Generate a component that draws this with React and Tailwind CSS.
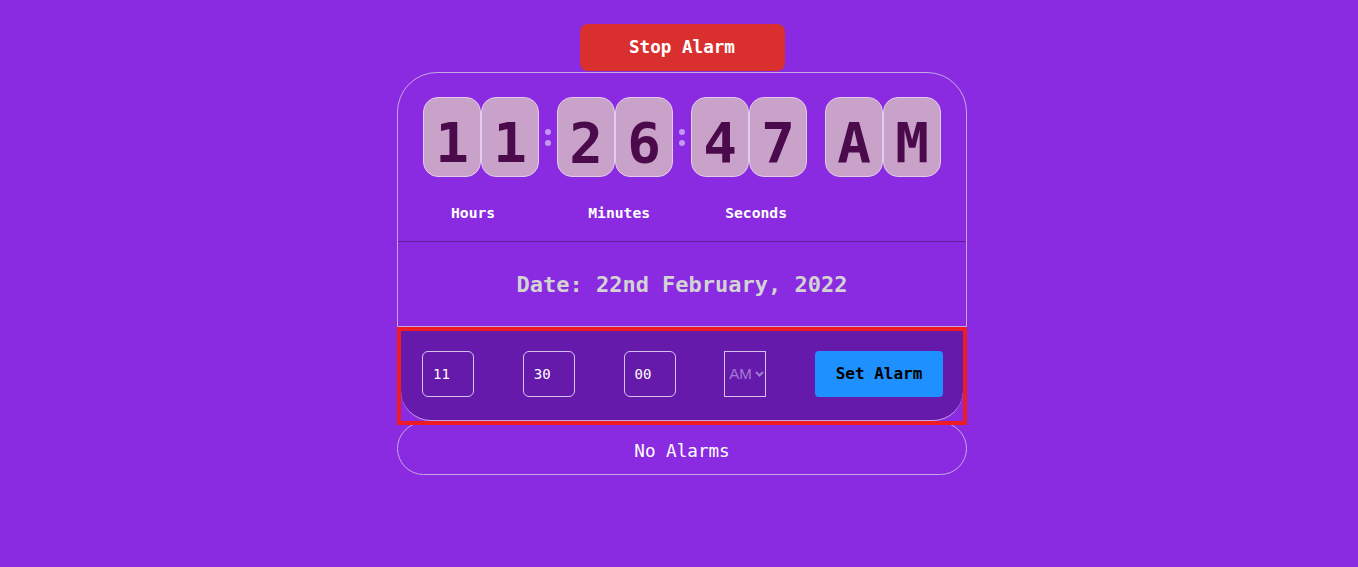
import React from "react";

const mono = { fontFamily: '"DejaVu Sans Mono", "Liberation Mono", monospace' };

function Box({ ch }) {
  return (
    <div className="w-[58px] h-[80px] rounded-[15px] bg-[#c8a2c8] border border-[#e4cbec] flex items-center justify-center">
      <span className="text-[56px] font-bold text-[#4b0a4b] leading-none translate-y-[6px]">{ch}</span>
    </div>
  );
}

function Colon({ show = true }) {
  return (
    <div className="w-[18px] h-[80px] flex flex-col items-center justify-center gap-[5px]">
      {show && <div className="w-[6px] h-[6px] rounded-full bg-[#c498f2]" />}
      {show && <div className="w-[6px] h-[6px] rounded-full bg-[#c498f2]" />}
    </div>
  );
}

function Field({ v }) {
  return (
    <div className="w-[52px] h-[46px] rounded-[6px] border border-[#d6c2ea] flex items-center pl-[10px] text-white text-[14px]">
      {v}
    </div>
  );
}

export default function App() {
  return (
    <div className="min-h-screen bg-[#8a2be2] flex flex-col items-center pt-[24px] pl-[6px]" style={mono}>
      <button className="w-[205px] h-[47px] rounded-[8px] bg-[#d9302f] text-white font-bold text-[17.6px]">
        Stop Alarm
      </button>
      <div className="mt-px w-[570px] border border-[#c8a6e6] rounded-t-[40px]">
        <div className="pt-[24px] pb-[18px] border-b border-[#5b1f96]">
          <div className="flex justify-center">
            <Box ch="1" />
            <Box ch="1" />
            <Colon />
            <Box ch="2" />
            <Box ch="6" />
            <Colon />
            <Box ch="4" />
            <Box ch="7" />
            <Colon show={false} />
            <Box ch="A" />
            <Box ch="M" />
          </div>
          <div className="mt-[26px] h-[20px] leading-[20px] flex text-white font-bold text-[14.7px] pl-[53px]">
            <span>Hours</span>
            <span className="ml-[93px]">Minutes</span>
            <span className="ml-[75px]">Seconds</span>
          </div>
        </div>
        <div className="h-[84px] flex items-center justify-center text-[#d3d3d3] font-bold text-[22px]">
          Date: 22nd February, 2022
        </div>
      </div>
      <div className="relative z-10 w-[570px] border-4 border-[#ed1c24]">
        <div className="w-[562px] h-[90px] bg-[#661aab] border-b border-[#c8a6e6] rounded-b-[30px] flex items-start justify-between pt-[20px] pl-[21px] pr-[20px]">
          <Field v="11" />
          <Field v="30" />
          <Field v="00" />
          <div
            className="w-[42px] h-[46px] border border-[#d6c2ea] flex items-center pl-[4px] gap-[3px] text-[#a47bd4] text-[15px]"
            style={{ fontFamily: '"Liberation Sans", Arial, sans-serif' }}
          >
            <span>AM</span>
            <svg width="9" height="6" viewBox="0 0 9 6" fill="none">
              <path d="M1 1l3.5 3.5L8 1" stroke="#a47bd4" strokeWidth="2" />
            </svg>
          </div>
          <button className="w-[128px] h-[46px] rounded-[4px] bg-[#1e90ff] text-black font-bold text-[16px]">
            Set Alarm
          </button>
        </div>
      </div>
      <div className="-mt-[3px] w-[570px] h-[53px] rounded-full border border-[#c8a6e6] flex items-center justify-center pt-[6px] text-white text-[17.6px]">
        No Alarms
      </div>
    </div>
  );
}
